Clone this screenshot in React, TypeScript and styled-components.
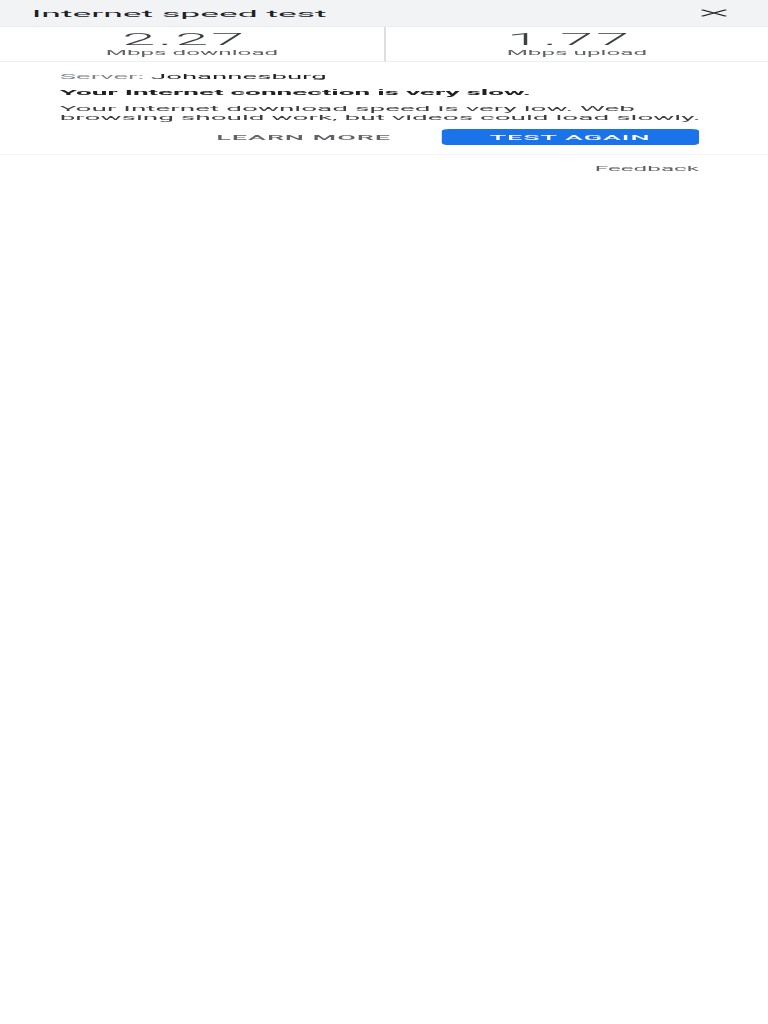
import React from 'react';
import styled, { createGlobalStyle } from 'styled-components';

// The reference is a 412px wide phone layout stretched onto the 768x1024 shot,
// so the page is laid out at that size and scaled once on the outer frame.
const SCALE_X = 768 / 412;
const SCALE_Y = 0.5;

const GlobalStyle = createGlobalStyle`
  html, body {
    margin: 0;
    padding: 0;
    background: #ffffff;
    overflow: hidden;
  }
  body {
    font-family: Roboto, "Liberation Sans", Arial, sans-serif;
    color: #202124;
  }
`;

const Frame = styled.div`
  width: 412px;
  transform: scale(${SCALE_X}, ${SCALE_Y});
  transform-origin: 0 0;
`;

const Header = styled.header`
  display: flex;
  align-items: center;
  justify-content: space-between;
  height: 52px;
  padding: 0 17px 0 17px;
  background: #f1f3f4;
  border-bottom: 1px solid #dadce0;
`;

const Title = styled.h1`
  margin: 0;
  font-size: 19px;
  font-weight: 400;
  color: #202124;
`;

const CloseButton = styled.button`
  display: flex;
  align-items: center;
  justify-content: center;
  width: 24px;
  height: 24px;
  padding: 0;
  border: 0;
  background: none;
  color: #202124;
`;

const Stats = styled.div`
  display: grid;
  grid-template-columns: 1fr 1fr;
  border-bottom: 1px solid #dadce0;
`;

const Stat = styled.div<{ $divider?: boolean }>`
  display: flex;
  flex-direction: column;
  align-items: center;
  height: 70px;
  padding-top: 8px;
  box-sizing: border-box;
  border-left: ${(p) => (p.$divider ? '1px solid #dadce0' : '0')};
`;

const Value = styled.div`
  margin-right: 8px;
  font-size: 32px;
  font-weight: 300;
  line-height: 36px;
  letter-spacing: 1.5px;
  color: #3c4043;
`;

const Unit = styled.div`
  font-size: 13px;
  line-height: 15px;
  color: #5f6368;
`;

const Result = styled.section`
  display: flex;
  flex-direction: column;
  padding: 19px 33px 18px 32px;
  border-bottom: 1px solid #e8eaed;
`;

const Server = styled.div`
  font-size: 14.8px;
  line-height: 20px;
  color: #202124;
`;

const Muted = styled.span`
  color: #80868b;
`;

const Verdict = styled.div`
  margin-top: 12px;
  font-size: 15px;
  font-weight: 700;
  line-height: 20px;
  color: #202124;
`;

const Detail = styled.p`
  margin: 12px 0 0;
  font-size: 15px;
  line-height: 18px;
  color: #3c4043;
`;

const Actions = styled.div`
  display: flex;
  justify-content: flex-end;
  gap: 1px;
  margin: 15px 4px 0 0;
`;

const ActionButton = styled.button<{ $primary?: boolean }>`
  height: 32px;
  padding: 0 26px;
  border: 0;
  border-radius: 4px;
  font-family: inherit;
  font-size: 14.5px;
  font-weight: 500;
  letter-spacing: 0.5px;
  text-transform: uppercase;
  background: ${(p) => (p.$primary ? '#1a73e8' : 'transparent')};
  color: ${(p) => (p.$primary ? '#ffffff' : '#5f6368')};
`;

const Footer = styled.div`
  display: flex;
  justify-content: flex-end;
  padding: 18px 37px 0 32px;
`;

const FeedbackLink = styled.a`
  font-size: 13px;
  line-height: 20px;
  color: #5f6368;
  text-decoration: none;
`;

const CloseIcon = () => (
  <svg width="24" height="24" viewBox="0 0 24 24" aria-hidden="true">
    <path d="M5.5 5.5 18.5 18.5M18.5 5.5 5.5 18.5" stroke="currentColor" strokeWidth="2" fill="none" />
  </svg>
);

const speeds = [
  { value: '2.27', unit: 'Mbps download' },
  { value: '1.77', unit: 'Mbps upload' },
];

const App = () => {
  return (
    <>
      <GlobalStyle />
      <Frame>
        <Header>
          <Title>Internet speed test</Title>
          <CloseButton aria-label="Close">
            <CloseIcon />
          </CloseButton>
        </Header>
        <Stats>
          {speeds.map((s, i) => (
            <Stat key={s.unit} $divider={i > 0}>
              <Value>{s.value}</Value>
              <Unit>{s.unit}</Unit>
            </Stat>
          ))}
        </Stats>
        <Result>
          <Server>
            <Muted>Server:</Muted> Johannesburg
          </Server>
          <Verdict>Your Internet connection is very slow.</Verdict>
          <Detail>
            Your Internet download speed is very low. Web browsing should work, but videos could load slowly.
          </Detail>
          <Actions>
            <ActionButton>Learn more</ActionButton>
            <ActionButton $primary>Test again</ActionButton>
          </Actions>
        </Result>
        <Footer>
          <FeedbackLink href="#">Feedback</FeedbackLink>
        </Footer>
      </Frame>
    </>
  );
};

export default App;
